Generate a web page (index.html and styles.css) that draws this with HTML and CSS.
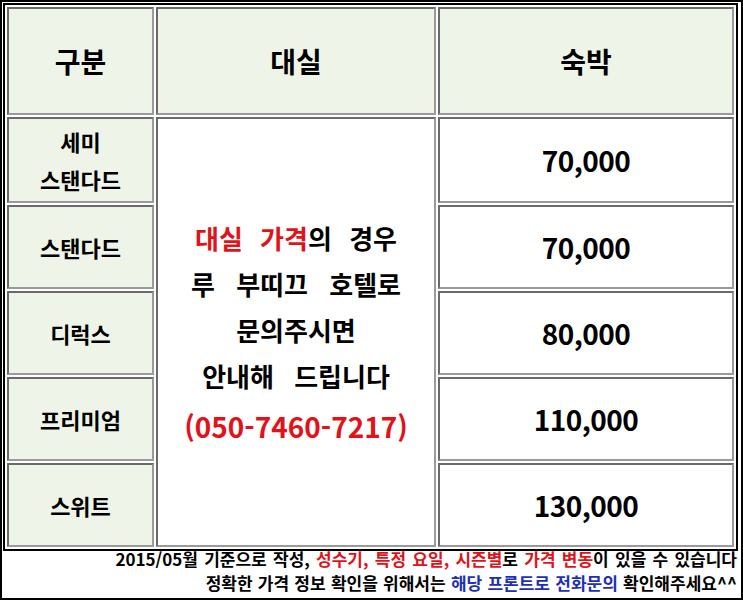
FILE: index.html
```html
<!DOCTYPE html>
<html lang="ko">
<head>
<meta charset="utf-8">
<title>요금표</title>
<link rel="stylesheet" href="styles.css">
</head>
<body>
<div class="page">
  <table class="rates">
    <thead>
      <tr class="head-row">
        <th class="c1">구분</th>
        <th class="c2">대실</th>
        <th class="c3">숙박</th>
      </tr>
    </thead>
    <tbody>
      <tr class="row first">
        <th class="lbl">세미<br>스탠다드</th>
        <td class="note" rowspan="5">
          <div class="nl l1"><span class="red">대실 가격</span>의 경우</div>
          <div class="nl l2">루 부띠끄 호텔로</div>
          <div class="nl">문의주시면</div>
          <div class="nl l4">안내해 드립니다</div>
          <div class="nl phone red">(050-7460-7217)</div>
        </td>
        <td class="price">70,000</td>
      </tr>
      <tr class="row">
        <th class="lbl">스탠다드</th>
        <td class="price">70,000</td>
      </tr>
      <tr class="row">
        <th class="lbl">디럭스</th>
        <td class="price">80,000</td>
      </tr>
      <tr class="row">
        <th class="lbl">프리미엄</th>
        <td class="price">110,000</td>
      </tr>
      <tr class="row">
        <th class="lbl">스위트</th>
        <td class="price">130,000</td>
      </tr>
    </tbody>
  </table>
  <div class="foot">
    <p class="f1">2015/05월 기준으로 작성, <span class="red">성수기, 특정 요일, 시즌별</span>로 <span class="red">가격 변동</span>이 있을 수 있습니다</p>
    <p class="f2">정확한 가격 정보 확인을 위해서는 <span class="blue">해당 프론트로 전화문의</span> 확인해주세요^^</p>
  </div>
</div>
</body>
</html>
```

FILE: styles.css
```css
html, body {
  margin: 0;
  padding: 0;
  background: #fff;
}

body {
  font-family: "Noto Sans CJK KR", "Noto Sans", sans-serif;
  color: #000;
}

.page {
  width: 743px;
  height: 600px;
  box-sizing: border-box;
  border: 2px solid #000;
  padding: 1px 4px 0 1px;
  overflow: hidden;
}

.rates {
  border-collapse: separate;
  border-spacing: 2px;
  border: 2px solid #000;
  table-layout: fixed;
  width: 735px;
}

.rates th,
.rates td {
  box-sizing: border-box;
  padding: 0;
  border: 2px solid #9a9a9a;
  border-top-color: #6a6a6a;
  border-left-color: #6a6a6a;
  text-align: center;
  vertical-align: middle;
  font-weight: 700;
}

.c1 { width: 147px; }
.c2 { width: 280px; }
.c3 { width: 296px; }

.head-row th {
  height: 108px;
  background: #eef4e7;
  font-size: 28px;
}

.row th,
.row td {
  height: 84px;
}

.row.first th,
.row.first .price {
  height: 86px;
}

.lbl {
  background: #eef4e7;
  font-size: 22px;
  line-height: 38px;
}

.price {
  background: #fff;
  font-size: 28px;
  letter-spacing: -0.5px;
}

.note {
  background: #fff;
  font-size: 26px;
  line-height: 46px;
}

.note .l1 { word-spacing: 10px; }
.note .l2 { word-spacing: 14px; }
.note .l4 { word-spacing: 13px; }

.note .phone {
  font-size: 28px;
  margin-top: 4px;
}

.red {
  color: #e2121a;
}

.blue {
  color: #1d2fb5;
}

.foot {
  margin-top: -4px;
  text-align: right;
  font-size: 17px;
  font-weight: 700;
  line-height: 24px;
}

.foot p {
  margin: 0;
}

.foot .f1 { word-spacing: 1.5px; }
.foot .f2 { word-spacing: 0.5px; }
```
